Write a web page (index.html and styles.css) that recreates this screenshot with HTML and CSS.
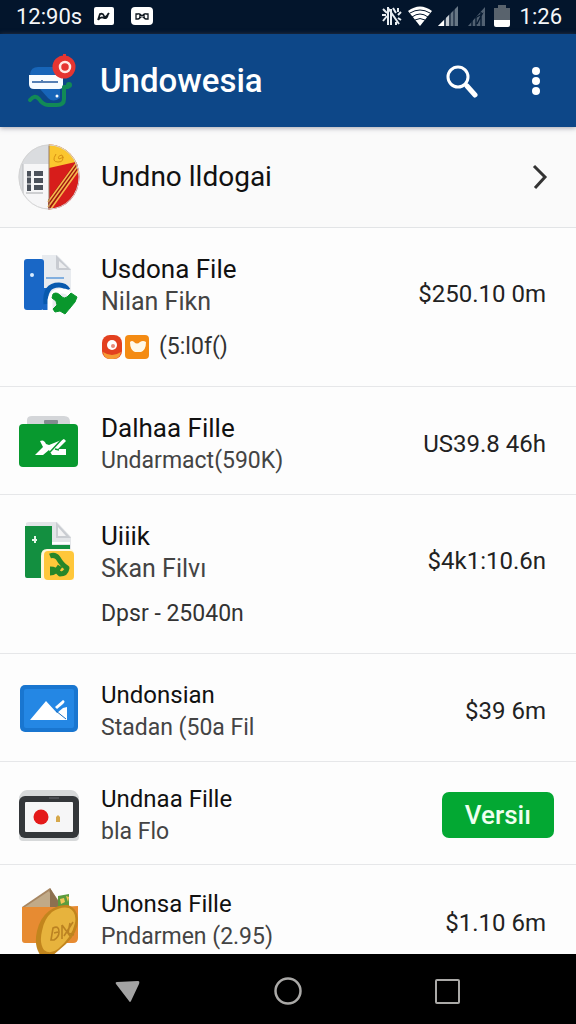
FILE: index.html
```html
<!DOCTYPE html>
<html lang="id">
<head>
<meta charset="utf-8">
<meta name="viewport" content="width=device-width, initial-scale=1">
<title>Undowesia</title>
<link rel="stylesheet" href="styles.css">
</head>
<body>
<div class="app">
  <div class="status">
    <div class="status-group status-left">
      <span>12:90s</span>
      <svg width="20" height="18" viewBox="0 0 20 18"><rect width="20" height="18" rx="2" fill="#fff"/><path d="M4 13l2-6q3-1 4 2t5-3M4 13q3-4 6-2 3 1 4-4" fill="none" stroke="#101820" stroke-width="1.8"/></svg>
      <svg class="status-second" width="22" height="18" viewBox="0 0 22 18"><rect width="22" height="18" rx="4" fill="#fff"/><path d="M5 7v5h2q2 0 2-3T7 7zM9 7l4 4M9 11l4-4M17 7v5h-2q-2 0-2-3t2-2z" fill="none" stroke="#101820" stroke-width="1.3"/></svg>
    </div>
    <div class="status-group status-right">
      <svg width="22" height="22" viewBox="0 0 22 22" fill="none" stroke="#e8edf2" stroke-width="2"><path d="M7 3l11 16M7 2v18M10 4v16M2 4l4 4M2 16l4-5M1 10h4M12 3l3 5M17 3v4M20 7l-3 3M17 13l3 2M15 17v3"/></svg>
      <svg width="26" height="22" viewBox="0 0 26 22"><path d="M1 6Q13-3 25 6L13 21z" fill="#fff"/><path d="M3 8q10-6 20 0M5 12q8-6 16 0M8 15q5-3 10 0" fill="none" stroke="#03152c" stroke-width="1"/></svg>
      <svg width="22" height="22" viewBox="0 0 22 22"><path d="M1 21L21 1v20z" fill="#687785"/><path d="M1 21l6-6v6z" fill="#fff"/><path d="M9 13l3-3v11H9z" fill="#c5cbd1"/><path d="M8 12v9M13 8v13M17 4v17" stroke="#03152c"/></svg>
      <svg class="signal-two" width="19" height="22" viewBox="0 0 19 22"><path d="M1 21L18 2v19z" fill="#526172"/><path d="M5 15v6M9 12v9M14 7v14M8 13l7-4-5 10" stroke="#071a31" stroke-width="1.4" fill="none"/></svg>
      <svg class="battery" width="16" height="22" viewBox="0 0 16 22"><path d="M4 0h8v3h4v12H0V3h4z" fill="#59636d"/><path d="M0 15h16v5q0 2-2 2H2q-2 0-2-2z" fill="#fff"/></svg>
      <span>1:26</span>
    </div>
  </div>

  <header class="appbar">
    <svg class="logo" width="52" height="54" viewBox="0 0 52 54"><path d="M4 20q1-7 8-7h22v31q-7 5-12 0l-8-9z" fill="#1765b8"/><path d="M3 21h34v10q0 4-4 4H8q-5 0-5-5z" fill="#f7fcff"/><path d="M6 28h26M16 26v3" stroke="#5680b4" stroke-width="2"/><path d="M4 46q5-6 9-1 4 6 9 6h9q7 0 7-6V33h4" fill="none" stroke="#128a56" stroke-width="4" stroke-linecap="round" stroke-linejoin="round"/><circle cx="43" cy="31" r="3" fill="#128a56"/><circle cx="31" cy="42" r="1.500" fill="#fff"/><circle cx="38" cy="13" r="11.500" fill="#e53531"/><path d="M37 0h3v3h-3z" fill="#e53531"/><circle cx="39" cy="13" r="5" fill="none" stroke="#ffe9e4" stroke-width="2.500"/></svg>
    <h1 class="brand">Undowesia</h1>
    <button class="icon-button" aria-label="Search"><svg width="34" height="34" viewBox="0 0 34 34" fill="none" stroke="#fff"><circle cx="14" cy="13" r="10" stroke-width="3"/><path d="M21 20l2 2" stroke-width="3"/><path d="M23 22l8 9" stroke-width="5" stroke-linecap="round"/></svg></button>
    <button class="icon-button more" aria-label="More"><svg width="10" height="30" viewBox="0 0 10 30" fill="#fff"><circle cx="5" cy="5" r="4"/><circle cx="5" cy="15" r="4"/><circle cx="5" cy="25" r="4"/></svg></button>
  </header>

  <main class="list">
    <a class="feature" href="#profile">
      <svg class="avatar" width="62" height="66" viewBox="0 0 62 66"><defs><clipPath id="face"><ellipse cx="31" cy="33" rx="30.500" ry="32.500"/></clipPath></defs><g clip-path="url(#face)"><path fill="#dadcdf" d="M0 0h31v66H0z"/><path fill="#f6f6f7" d="M5 20h26v46H5z"/><path d="M5 20v46" stroke="#b8babd"/><path d="M9 27h4v20H9zM16 27h9v5h-9zM16 34h9v5h-9zM16 41h9v5h-9z" fill="#4c525b"/><path d="M9 33h4M9 40h4" stroke="#f6f6f7"/><path d="M8 49h17" stroke="#a6a8ab"/><path fill="#d71d1b" d="M31 0h31v66H31z"/><path fill="#fbc62e" d="M31 0h31v17L31 24z"/><path d="M38 10q-5 8 2 8t4-7q-5 1-3 4l5-2" fill="none" stroke="#d69013"/><path d="M30 56L62 12v10L30 68z" fill="#9e170f"/><path d="M30 58L62 14M30 63L62 19M30 69L62 24" stroke="#f5b64b" stroke-width="1.600"/><path d="M31 0v66" stroke="#987d66"/></g><ellipse cx="31" cy="33" rx="30" ry="32" fill="none" stroke="#d4d4d4"/></svg>
      <span class="feature-name">Undno lldogai</span>
      <svg width="18" height="26" viewBox="0 0 18 26" fill="none" stroke="#333" stroke-width="3"><path d="M2 2l11 11L3 24"/></svg>
    </a>

    <section class="row tall">
      <svg class="icon" width="62" height="66" viewBox="0 0 62 66"><path d="M24 3h15l14 14v40H24z" fill="#e8ebef"/><path d="M38 3l15 15H40q-2 0-2-2z" fill="#c8cbd1"/><path d="M41 9l8 7h-8z" fill="#edeef0"/><path d="M28 26h18" stroke="#82afdf" stroke-width="2"/><rect x="6" y="7" width="20" height="51" rx="3" fill="#1967c6"/><path d="M25 36h5v22h-5z" fill="#1967c6"/><path d="M28 52q-2-19 13-19 6 0 9 5" fill="none" stroke="#0759ae" stroke-width="5"/><path d="M32 60V48q2-9 12-9 6 0 8 4" fill="none" stroke="#fff" stroke-width="5"/><circle cx="14" cy="23" r="2" fill="#d8ebff"/><path d="M35 42q4-3 9 3 2 2 5 0l4-4 6 4-2 5-10 12-5-3-5 1-2-3 4-4-1-4-4-3z" fill="#09972c" stroke="#09972c" stroke-width="1" stroke-linejoin="round"/></svg>
      <div class="copy"><h2 class="name">Usdona File</h2><p class="detail">Nilan Fikn</p>
        <div class="extra"><svg class="badges" width="49" height="26" viewBox="0 0 49 26"><rect x="1" y="1" width="20" height="24" rx="8" fill="#e3401f"/><path d="M2 18q9 6 18 0-1 7-8 7H9q-6 0-7-7z" fill="#f59b35"/><circle cx="11" cy="11" r="5" fill="#fff"/><circle cx="12" cy="12" r="2" fill="#e98a78"/><rect x="24" y="1" width="24" height="24" rx="4" fill="#f48b13"/><path d="M29 8q2-2 4 0 3 3 6 0 3-2 6 0 0 8-5 10h-6q-5-2-5-10z" fill="#fff9e9"/></svg><span>(5:l0f()</span></div>
      </div>
      <p class="price">$250.10 0m</p>
    </section>

    <section class="row">
      <svg class="icon" width="62" height="66" viewBox="0 0 62 66"><path d="M9 15V9q0-4 5-4h32q6 0 6 6v4z" fill="#d4d6d9"/><rect x="26" y="9" width="14" height="4" rx="1" fill="#858b91"/><rect x="1" y="13" width="59" height="43" rx="4" fill="#08992f"/><path d="M22 30q4-2 6 3l3 1 15-6 2 2-8 8h8v6H34l-3-5-6 5h-8l8-8z" fill="#fff"/><path d="M45 27L32 41M37 38l4 1" stroke="#08992f" stroke-width="1.500"/></svg>
      <div class="copy"><h2 class="name">Dalhaa Fille</h2><p class="detail compact">Undarmact(590K)</p></div>
      <p class="price">US39.8 46h</p>
    </section>

    <section class="row tall">
      <svg class="icon" width="62" height="66" viewBox="0 0 62 66"><path d="M8 4q1-1 3-1h28l14 15v40H8z" fill="#e3e5e8"/><path d="M38 3l15 16H38z" fill="#c9ccd1"/><path d="M40 8l8 9h-8z" fill="#f3f3f4"/><path d="M7 7h27v19h18v33H9q-2 0-2-2z" fill="#138f40"/><path d="M34 24h18" stroke="#fff" stroke-width="2"/><path d="M17 17v7M14 21h5" stroke="#e6f6e9" stroke-width="2"/><path d="M23 61V37q0-7 6-7h22q5 0 5 5v26z" fill="#fff7dc"/><rect x="26" y="32" width="30" height="29" rx="4" fill="#ffc73a"/><path d="M32 37q5-2 8 2 4 7 9 10-1 6-7 6-4-5-10-5M42 47q-4 7-10 7" fill="none" stroke="#268629" stroke-width="5" stroke-linejoin="round"/></svg>
      <div class="copy"><h2 class="name">Uiiik</h2><p class="detail">Skan Filvı</p><div class="extra small">Dpsr - 25040n</div></div>
      <p class="price">$4k1:10.6n</p>
    </section>

    <section class="row">
      <svg class="icon" width="62" height="66" viewBox="0 0 62 66"><rect x="2" y="7" width="58" height="47" rx="5" fill="#1976d0"/><rect x="6" y="11" width="50" height="39" rx="2" fill="#2487e4"/><path d="M12 42l16-19 11 12 6-5 4-1v13z" fill="#fff"/><path d="M37 29l8-7q3 1 0 4l-6 5z" fill="#fff"/><path d="M38 33l10 8" stroke="#176fc3"/></svg>
      <div class="copy"><h2 class="name compact">Undonsian</h2><p class="detail compact">Stadan (50a Fil</p></div>
      <p class="price">$39 6m</p>
    </section>

    <section class="row short">
      <svg class="icon" width="62" height="66" viewBox="0 0 62 66"><path d="M9 8h44q5 0 8 7v40q0 4-4 4H5q-4 0-4-4V15q3-7 8-7z" fill="#d7d9da"/><rect x="1" y="14" width="60" height="42" rx="6" fill="#34373a"/><rect x="7" y="20" width="48" height="30" rx="1" fill="#f6f6f7"/><circle cx="23" cy="35" r="7.500" fill="#e41919"/><path d="M40 33l2 2v5h-4v-5z" fill="#d6a84b"/><path d="M31 16h10" stroke="#686b70"/></svg>
      <div class="copy"><h2 class="name compact">Undnaa Fille</h2><p class="detail compact">bla Flo</p></div>
      <button class="action">Versiı</button>
    </section>

    <section class="row last">
      <svg class="icon" width="62" height="72" viewBox="0 0 62 72"><path d="M4 20L32 1l10 15v28H4z" fill="#a78763"/><path d="M7 20L31 4l7 16z" fill="#c1aa88"/><path d="M32 1l8 13v8l-8-2z" fill="#8c7050"/><path d="M40 9l11-2v12l-11 1z" fill="#5c9c3d"/><path d="M42 12l4-1 1 4-4 2zM48 9l3 1-1 5z" fill="#f4c557"/><path d="M4 20h36l20-1v32q0 5-5 5H7q-3 0-3-3z" fill="#e78b32"/><path d="M31 24q9-7 19-6 9 3 10 14 0 14-12 25L33 70q-8 4-12-4-5-9-2-22 3-13 12-20z" fill="#c2851d"/><path d="M34 25q9-6 17-4 8 4 6 15-3 14-17 26-8 6-14 1-5-7-2-19 2-12 10-19z" fill="#e7b33d"/><path d="M33 53l2-12q6-3 6 4 0 5-5 8zm3-7l4-1m4-7v14m0-14l8 11m0-13l-2 10 6 2M46 49l9-14" fill="none" stroke="#bb8222" stroke-width="1.600"/></svg>
      <div class="copy"><h2 class="name compact">Unonsa Fille</h2><p class="detail compact">Pndarmen (2.95)</p></div>
      <p class="price">$1.10 6m</p>
    </section>
  </main>

  <nav class="navbar" aria-label="System">
    <button class="nav-button" aria-label="Back"><svg width="28" height="26" viewBox="0 0 28 26"><path d="M3 4l21-1q2 0 1 3L17 23q-1 2-2 0L2 6Q1 4 3 4z" fill="#a3a3a3"/></svg></button>
    <button class="nav-button" aria-label="Home"><svg width="30" height="30" viewBox="0 0 30 30"><circle cx="15" cy="15" r="12.500" fill="none" stroke="#aaa9a7" stroke-width="2.500"/></svg></button>
    <button class="nav-button" aria-label="Recents"><svg width="28" height="28" viewBox="0 0 28 28"><rect x="2" y="3" width="23" height="23" rx="1" fill="none" stroke="#aaa9a7" stroke-width="2"/></svg></button>
  </nav>
</div>
</body>
</html>
```
FILE: styles.css
```css
* { box-sizing: border-box; }
body, h1, h2, p { margin: 0; }
body { font-family: Roboto, "Liberation Sans", sans-serif; color: #111; background: #fdfdfd; }
svg { display: block; flex: none; }
button { border: 0; padding: 0; font: inherit; background: none; cursor: pointer; }
.app { display: flex; flex-direction: column; height: 100vh; }

.status { display: flex; justify-content: space-between; align-items: center; height: 34px; padding: 0 14px 2px 16px; background: #03152c; color: #f4f6f8; font-size: 22px; flex: none; }
.status-group { display: flex; align-items: center; }
.status-left { gap: 12px; }
.status-second { margin-left: 5px; }
.status-right { gap: 4px; }
.signal-two { margin-left: 4px; }
.battery { margin: 0 6px 0 4px; }

.appbar { position: relative; display: flex; align-items: center; height: 93px; padding: 0 30px 0 26px; background: #0d4788; color: #fff; box-shadow: 0 1px 5px #6679; flex: none; }
.logo { margin-right: 22px; }
.brand { flex: 1; font-size: 33px; line-height: 40px; font-weight: 500; }
.icon-button { display: flex; justify-content: center; }
.more { width: 20px; margin-left: 48px; }

.list { flex: 1; min-height: 0; overflow: hidden; }
.feature { display: flex; align-items: center; gap: 21px; height: 101px; padding: 0 26px 0 18px; border-bottom: 1px solid #e2e4e6; background: #fafafa; color: inherit; text-decoration: none; }
.feature-name { flex: 1; font-size: 28px; line-height: 34px; }

.row { display: flex; align-items: flex-start; padding: 24px 30px 17px 18px; border-bottom: 1px solid #e6e7e9; }
.tall { padding-bottom: 23px; }
.short { padding: 20px 22px 16px 18px; }
.last { padding-top: 22px; border: 0; }
.icon { margin-right: 21px; }
.copy { flex: 1; }
.name { font-size: 26px; line-height: 34px; font-weight: 400; }
.name.compact { font-size: 24px; }
.detail { font-size: 25px; line-height: 32px; color: #444; }
.detail.compact { font-size: 23px; }
.extra { display: flex; align-items: center; gap: 9px; margin-top: 13px; font-size: 23px; line-height: 32px; color: #333; }
.price { align-self: center; font-size: 24px; line-height: 32px; color: #222; }
.tall .price { padding-bottom: 28px; }
.action { align-self: center; padding: 7px 23px; border-radius: 7px; background: #03a833; color: #effff0; font-size: 26px; line-height: 32px; font-weight: 500; }

.navbar { display: flex; justify-content: space-between; align-items: center; height: 70px; padding: 4px 114px 0; background: #000; flex: none; }
.nav-button { display: flex; }
```
